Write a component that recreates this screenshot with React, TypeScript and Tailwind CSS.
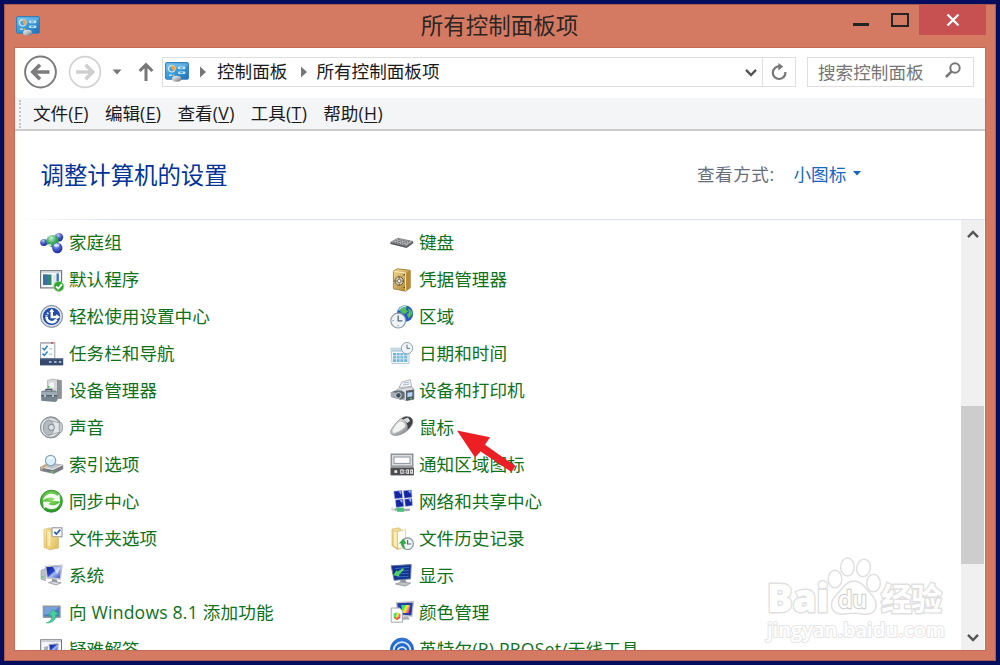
import React from "react";

const Svg = ({ children }: { children: React.ReactNode }) => (
  <svg viewBox="0 0 24 24" className="block h-6 w-6 shrink-0 overflow-visible">
    {children}
  </svg>
);

const Defs = () => (
  <svg className="absolute h-0 w-0">
    <defs>
      <linearGradient id="cp" x1="0" y1="0" x2="1" y2="1">
        <stop offset="0" stopColor="#5fb9ea" />
        <stop offset="0.5" stopColor="#3a9ad9" />
        <stop offset="1" stopColor="#1f6fb8" />
      </linearGradient>
      <radialGradient id="blueBall" cx="0.4" cy="0.25" r="0.8">
        <stop offset="0" stopColor="#c3d0fa" />
        <stop offset="0.45" stopColor="#4a62cc" />
        <stop offset="1" stopColor="#14259c" />
      </radialGradient>
      <radialGradient id="greenBall" cx="0.4" cy="0.25" r="0.8">
        <stop offset="0" stopColor="#c8f0d0" />
        <stop offset="0.5" stopColor="#43ac63" />
        <stop offset="1" stopColor="#17803a" />
      </radialGradient>
      <radialGradient id="sync" cx="0.5" cy="0.35" r="0.7">
        <stop offset="0" stopColor="#9be36d" />
        <stop offset="0.6" stopColor="#4cb838" />
        <stop offset="1" stopColor="#1e8a26" />
      </radialGradient>
      <linearGradient id="metal" x1="0" y1="0" x2="1" y2="1">
        <stop offset="0" stopColor="#f4f4f4" />
        <stop offset="0.55" stopColor="#b4b7ba" />
        <stop offset="1" stopColor="#5c6064" />
      </linearGradient>
      <linearGradient id="screen" x1="0" y1="0" x2="1" y2="1">
        <stop offset="0" stopColor="#0d1c8e" />
        <stop offset="0.45" stopColor="#2444c4" />
        <stop offset="0.55" stopColor="#a9bdf5" />
        <stop offset="1" stopColor="#1a34b0" />
      </linearGradient>
      <linearGradient id="folder" x1="0" y1="0" x2="1" y2="1">
        <stop offset="0" stopColor="#fdf0b4" />
        <stop offset="1" stopColor="#dfb655" />
      </linearGradient>
      <linearGradient id="safe" x1="0" y1="0" x2="1" y2="1">
        <stop offset="0" stopColor="#f0d890" />
        <stop offset="1" stopColor="#a87c28" />
      </linearGradient>
      <linearGradient id="rainbow" x1="0" y1="0" x2="1" y2="0.4">
        <stop offset="0" stopColor="#26d8e8" />
        <stop offset="0.35" stopColor="#48e04a" />
        <stop offset="0.6" stopColor="#fff03a" />
        <stop offset="1" stopColor="#f03a90" />
      </linearGradient>
      <linearGradient id="wifi" x1="0" y1="0" x2="0" y2="1">
        <stop offset="0" stopColor="#2f78dc" />
        <stop offset="1" stopColor="#124aa8" />
      </linearGradient>
    </defs>
  </svg>
);

const PanelIcon = () => (
  <svg viewBox="0 0 24 20" className="block h-5 w-6 shrink-0">
    <rect x="0.6" y="0.6" width="22.8" height="16.6" rx="1" fill="url(#cp)" stroke="#2f7db6" />
    <path d="M1.5 1.5H22.5V4L1.5 9Z" fill="#fff" opacity="0.18" />
    <circle cx="6.8" cy="6.8" r="3.2" fill="#4aa0e0" stroke="#d9effb" strokeWidth="1.2" />
    <path d="M6.8 6.8V3.2A3.5 3.5 0 0 1 8.8 9.6Z" fill="#f6a53a" />
    <rect x="13" y="4.6" width="7.4" height="2.6" rx="1.2" fill="#c5e6f8" />
    <rect x="13" y="9.4" width="7.4" height="2.6" rx="1.2" fill="#c5e6f8" />
    <path d="M15 5.9h3M15 10.7h3" stroke="#3c8fcb" strokeWidth="1" />
    <path d="M4 13.2h3" stroke="#cfe9f8" strokeWidth="1.3" />
    <circle cx="8.4" cy="13.2" r="0.9" fill="#f9b24a" />
    <ellipse cx="11.6" cy="16.8" rx="4.6" ry="3" fill="url(#metal)" />
  </svg>
);

const HomeGroup = () => (
  <Svg>
    <circle cx="19" cy="6.3" r="4.2" fill="url(#blueBall)" />
    <circle cx="3.8" cy="11.5" r="3.6" fill="url(#blueBall)" />
    <circle cx="12.5" cy="10.2" r="6.2" fill="url(#greenBall)" />
    <circle cx="17.3" cy="17" r="5.2" fill="url(#blueBall)" />
    <ellipse cx="16.6" cy="14.2" rx="2.8" ry="1.5" fill="#fff" opacity="0.6" />
    <ellipse cx="9.4" cy="14.4" rx="2.2" ry="1.4" fill="#fff" opacity="0.75" />
  </Svg>
);
const DefaultPrograms = () => (
  <Svg>
    <rect x="0.6" y="2.7" width="21" height="17.2" fill="#f7f8fa" stroke="#6b7078" strokeWidth="1.1" />
    <path d="M1 4h20" stroke="#c9ced6" strokeWidth="1.4" />
    <rect x="3" y="6.5" width="8.5" height="10.5" fill="#2f8577" />
    <path d="M3 6.5h4v10.5h-4z" fill="#3b70a4" />
    <rect x="13" y="6.5" width="3" height="10.5" fill="#e2e6ec" />
    <rect x="16.5" y="5.5" width="2.4" height="8" fill="#3873bb" />
    <circle cx="18.8" cy="18.4" r="5" fill="#2fa82e" stroke="#8bce82" strokeWidth="0.7" />
    <path d="M16 18.3l2.2 2.4 3.8-4.6" fill="none" stroke="#fff" strokeWidth="1.8" />
  </Svg>
);
const EaseAccess = () => (
  <Svg>
    <circle cx="11.6" cy="11.4" r="11" fill="#c7ccd4" stroke="#848c9c" strokeWidth="1" />
    <circle cx="11.6" cy="11.4" r="9.2" fill="#234cae" stroke="#f2f5fb" strokeWidth="1" />
    <path d="M6.6 12a5.2 5.2 0 0 0 9.8 2.4" fill="none" stroke="#fff" strokeWidth="2.6" />
    <path d="M6.4 11.8a5.5 5.5 0 0 1 2.5-4.4" fill="none" stroke="#d5e0f9" strokeWidth="2" strokeDasharray="1.8 1" />
    <path d="M11.8 5v7h6" fill="none" stroke="#fff" strokeWidth="2.4" />
    <path d="M9.4 7l2.4-3.6L14.2 7zM16.2 9.2l4 2.8-4 2.6z" fill="#fff" />
  </Svg>
);
const Taskbar = () => (
  <Svg>
    <rect x="0.6" y="0.8" width="14.2" height="16" fill="#fbfbfc" stroke="#9b9fa6" />
    <path d="M1.5 1h12.8" stroke="#a9adb4" strokeWidth="1.2" />
    <path d="M11 1h2" stroke="#d84a44" strokeWidth="1.5" />
    <path d="M2.5 6l1.8 1.8 3.3-4M2.5 11.6l1.8 1.8 3.3-4" fill="none" stroke="#2d86cb" strokeWidth="1.5" />
    <path d="M9 6.8h3.5M9 12.2h3.5" stroke="#b8bcc3" />
    <rect x="0" y="16.4" width="23.2" height="7" fill="#35496d" />
    <path d="M0 16.8h23.2" stroke="#667a9c" />
    <path d="M9 20h2.6M14 20h2.6M18.8 20h2.6" stroke="#9eb0cc" strokeWidth="2" />
  </Svg>
);
const DeviceManager = () => (
  <Svg>
    <path d="M7.5 1.5l4-1.4L21.6 1.4v18l-9 1-5-2z" fill="#d4d8da" stroke="#a4a9ac" strokeWidth="0.7" />
    <path d="M17 0.8l4.6.6v18l-4.6.6z" fill="#8c9296" />
    <path d="M9.5 3.5h4.5v5h-4.5z" fill="#f5f7f7" />
    <circle cx="8.6" cy="8" r="1" fill="#4fc352" />
    <path d="M6 12.2v-1.8h5.6v1.8" fill="none" stroke="#4c5962" strokeWidth="1.4" />
    <path d="M1.2 12.6l2-1.2h12l2.2 1.6v8.6l-2 1.3-14.2-1.2z" fill="#74848f" />
    <path d="M1.2 12.8h16v3.4h-16z" fill="#9baab4" />
    <path d="M1 16.7h16" stroke="#4b5962" />
    <path d="M5 15.8v2M13 15.8v2" stroke="#e4eaee" strokeWidth="1.4" />
  </Svg>
);
const Sound = () => (
  <Svg>
    <circle cx="11" cy="11.4" r="10.6" fill="#a3a8ad" stroke="#868b90" />
    <circle cx="10.4" cy="11.4" r="8.6" fill="#c8ced2" stroke="#e7eaec" strokeWidth="1.3" />
    <path d="M8 4.2L20 7q2.6 4.4 0 9L8 19.4z" fill="#e2e6e8" stroke="#90969a" strokeWidth="0.7" />
    <ellipse cx="8.6" cy="11.6" rx="5.2" ry="7.6" fill="#b3bac0" stroke="#8c949b" strokeWidth="0.8" />
    <circle cx="11.4" cy="11.4" r="3" fill="#dbe1e5" stroke="#7d858c" />
    <ellipse cx="20.8" cy="11.4" rx="1.8" ry="5" fill="#c7cbce" stroke="#8d9296" strokeWidth="0.7" />
  </Svg>
);
const Indexing = () => (
  <Svg>
    <path d="M0.5 14l8-4 14.4 2v4l-9 4.6L0.5 17.6z" fill="#bfc3c6" stroke="#96999c" strokeWidth="0.7" />
    <path d="M0.5 14.2L12.8 16.8 22.8 12v4l-9 4.6L0.5 17.6z" fill="#777c80" />
    <path d="M1 14l11.8 2.4L22.4 12" fill="none" stroke="#eef0f1" />
    <path d="M11 18.8l2.6.4" stroke="#4ed34c" strokeWidth="1.8" />
    <path d="M6.8 11.2L1 16.5" stroke="#d6a672" strokeWidth="1.8" />
    <circle cx="10.6" cy="7.6" r="5.2" fill="#d9eefb" stroke="#8aa5b8" strokeWidth="1.2" />
    <path d="M8 6q2.6-2.8 5.4-.4" fill="none" stroke="#fff" strokeWidth="1.5" />
  </Svg>
);
const Sync = () => (
  <Svg>
    <circle cx="11.4" cy="11.2" r="11" fill="url(#sync)" stroke="#2f8b35" strokeWidth="0.9" />
    <path d="M2.8 10.6C4.4 3.6 12.6 1.8 17.4 5.8l2-1.7.7 7.3-7.8-.7 2.2-2C11.4 6.5 6.6 7.4 2.8 10.6z" fill="#f7fdf4" />
    <path d="M20 12.2C18.6 19.2 10.4 21 5.6 17l-1.8 1.7-.8-7.3 7.7.7-2.2 2c3.2 2.2 7.8 1.3 11.5-1.9z" fill="#f7fdf4" />
  </Svg>
);
const FolderOptions = () => (
  <Svg>
    <path d="M4 2.4l6-1.6 1 1.8V22l-7-1.4z" fill="url(#folder)" stroke="#d5b461" strokeWidth="0.6" />
    <rect x="12" y="0.8" width="10" height="9" fill="#fff" stroke="#858b95" />
    <path d="M14.3 5l2.2 2 3.8-4.4" fill="none" stroke="#2e62b3" strokeWidth="1.7" />
    <path d="M6.5 3.6l4.2-1.4.8 7.2 7 1.3V21l-8.8 1.8-3.2-1.6z" fill="url(#folder)" stroke="#d5b461" strokeWidth="0.6" />
    <path d="M9.4 5v14" stroke="#fff4c8" strokeWidth="1.5" />
  </Svg>
);
const Monitor = () => (
  <>
    <path d="M5.5 2.5l16.5-1.2-1.6 13.7L7.2 14z" fill="url(#screen)" stroke="#c4c7cd" strokeWidth="1.4" />
    <path d="M12 15l4.6.5 1 3H12z" fill="#92969b" />
    <path d="M8.4 18.6l5-1.3 7.8 1.5-5.2 2.2z" fill="#d6d8dc" stroke="#868a90" strokeWidth="0.7" />
  </>
);
const SystemIcon = () => (
  <Svg>
    <path d="M1 6.2l4.4-1.6v12L1 15.2z" fill="#bdc1c5" stroke="#8f9498" strokeWidth="0.6" />
    <path d="M1.7 13h1.7" stroke="#45c950" strokeWidth="1.4" />
    <Monitor />
    <path d="M12.8 2.7l4.4 7.5 3.7-7.9z" fill="#e7edff" opacity="0.75" />
  </Svg>
);
const AddFeatures = () => (
  <Svg>
    <rect x="3.4" y="5.2" width="16.6" height="11" fill="#4d7dc2" stroke="#91979f" strokeWidth="1.4" />
    <path d="M4.2 6h15l-9 7-6 .8z" fill="#8cb6e5" opacity="0.65" />
    <path d="M6.4 21.8c5-1.4 5.6-4.6 5-7.4l-3 .7 4.4-6.6 6 4.8-3 .6c.4 4.8-4 8.4-9.4 7.9z" fill="#47d09c" stroke="#249e72" strokeWidth="0.6" />
  </Svg>
);
const Troubleshoot = () => (
  <Svg>
    <rect x="0.7" y="1.8" width="20.8" height="19" fill="#f5f6f9" stroke="#6e737c" />
    <path d="M1 3.2h20" stroke="#cbd0d7" strokeWidth="1.8" />
    <path d="M4 9l4-1v8H4z" fill="#aab1bb" />
    <path d="M9 6.5l9.2-.8-.6 8.3H9.8z" fill="url(#screen)" stroke="#a8aeb9" />
  </Svg>
);
const Keyboard = () => (
  <Svg>
    <path d="M0.4 11.8L7.8 7.4 23.2 10.6v1.6l-6.6 4.8L0.4 13z" fill="#55585b" />
    <path d="M0.6 11.2L8 7.2 22.8 10.4 16.2 15z" fill="#b9bbbd" stroke="#76797b" strokeWidth="0.7" />
    <path d="M3.4 11L16 13.8M5.6 9.7L18.4 12.4M8 8.5l12.4 2.6" stroke="#55585b" strokeWidth="0.9" strokeDasharray="1.7 0.8" />
  </Svg>
);
const Credential = () => (
  <Svg>
    <path d="M3.4 3l4-2.2 12.8 1.4v17.6l-4.6 3.4-12.2-2.4z" fill="url(#safe)" stroke="#977633" strokeWidth="0.8" />
    <path d="M15.6 5.2l4.6-3v17.6l-4.6 3.4z" fill="#b88b32" />
    <path d="M3.6 3.3l12 1.7v17.8" fill="none" stroke="#f8e9b9" />
    <circle cx="9.2" cy="13" r="4.2" fill="#d5cfbd" stroke="#6a5c39" />
    <circle cx="9.2" cy="13" r="1.8" fill="#f2eee2" stroke="#6a5c39" strokeWidth="0.8" />
    <path d="M9.2 8v2.6M9.2 15.6V18M4.2 13h2.6M11.6 13h2.6" stroke="#665732" strokeWidth="0.9" />
    <path d="M13.4 6.8h1.6M13.4 19.4h1.6" stroke="#6c592f" strokeWidth="1.4" />
  </Svg>
);
const Region = () => (
  <Svg>
    <circle cx="15" cy="8.6" r="8.2" fill="#2458c8" />
    <path d="M9.5 3q4-3 7.4-2l-1 3.6 2.2 1.6-3.4 3-3.8-1.6zM18 3.3q4 1.8 4.6 5.5l-3.8 4.6-2-3.8 2.2-2z" fill="#53bd58" />
    <path d="M8.7 5.4q3-4.5 7.3-4" fill="none" stroke="#b9dcff" strokeWidth="1.4" />
    <circle cx="8.2" cy="15.6" r="7.4" fill="#edf3f6" stroke="#8f9da6" strokeWidth="1.2" />
    <path d="M8.2 10.6v5.2h4.2" fill="none" stroke="#53697a" strokeWidth="1.3" />
    <path d="M8.2 21.3v-1.2M2.5 15.6h1.2" stroke="#7a8b97" />
  </Svg>
);
const DateTime = () => (
  <Svg>
    <path d="M1 6.2h18v15.4H2z" fill="#f5fafc" stroke="#a5b9c4" strokeWidth="0.8" />
    <path d="M2 8.5h14" stroke="#b2cfdd" strokeWidth="2.4" />
    <path d="M3 11h14.4v9H3z" fill="#74b5d8" />
    <path d="M3 13.8h14.5M3 16.8h14.5M6.5 11v9M10 11v9M13.6 11v9" stroke="#e1f1f8" strokeWidth="0.8" />
    <circle cx="17" cy="6.2" r="5.7" fill="#eff4f6" stroke="#96a5ae" />
    <path d="M17 2.7v3.7h3" fill="none" stroke="#5d7486" />
  </Svg>
);
const Printers = () => (
  <Svg>
    <path d="M9 8.5l3-5.5 8.4-2.2 1.2 6.7z" fill="#f8f9fa" stroke="#90979c" strokeWidth="0.7" />
    <path d="M13.5 4.2l5.7-1M13 6l6.5-1" stroke="#a2bbce" />
    <path d="M7 10.3l15-2.5 2 3v9.4l-7 1.4-10-3z" fill="#dce0e3" stroke="#8d9499" strokeWidth="0.7" />
    <path d="M16 11.8l7.8-1.2v9.6l-7.8 1.6z" fill="#4f5a66" />
    <path d="M17.4 13.8l5-.8v4.2l-5 1z" fill="#b4d4f4" />
    <path d="M1.2 13.2l4-1.7h6.2l3.2 2v5.7l-4 1.5-9.4-2.7z" fill="#626c75" />
    <path d="M0.6 13l9 1.2v6L0.8 17.6z" fill="#a5adb4" />
    <circle cx="8.4" cy="16.4" r="2.8" fill="#414d5b" stroke="#e0e4e8" strokeWidth="0.9" />
    <path d="M20 19.4h2" stroke="#52d154" />
  </Svg>
);
const MouseIcon = () => (
  <Svg>
    <path d="M0.8 14.6C4.4 8.4 9 2.6 14.5 .8q5.4-1.2 7.9 2.6c1.6 4.2-2 9-7.6 12.9-4.4 3-9.8 4-13 2.2q-1.9-1.4-1-3.9z" fill="url(#metal)" stroke="#74777a" strokeWidth="0.6" />
    <path d="M11.6 2.4c3.6-2.2 8.8-2.4 10.6 1 1 3.8-1.4 7.4-4.8 10.4 1-4.4-.6-8.4-5.8-11.4z" fill="#3e4144" />
    <path d="M13 3.6l5-2 2.2 3.4-3 2z" fill="#d9dddf" />
    <path d="M2.6 14.4c2.6-4.6 5-7.6 8-8.8 3 .6 4.8 2.6 4.8 5-3.4 4-9.8 7-12.4 6.2z" fill="#fff" opacity="0.8" />
  </Svg>
);
const Tray = () => (
  <Svg>
    <rect x="1.2" y="1.2" width="21.6" height="12" fill="#d7dce1" stroke="#7b8086" strokeWidth="1.2" />
    <rect x="4" y="4" width="16" height="6.4" fill="#fafbfc" stroke="#8f959b" />
    <path d="M0.5 14.4h23.4v8h-23.4z" fill="#4b4d50" />
    <path d="M4.4 18.6h2.8" stroke="#eee" strokeWidth="2.6" />
    <rect x="10.8" y="16.9" width="2.3" height="3.4" fill="none" stroke="#eee" />
    <rect x="16.8" y="16.9" width="1.8" height="3.4" fill="none" stroke="#eee" />
    <rect x="20.7" y="16.9" width="1.7" height="3.4" fill="none" stroke="#eee" />
    <path d="M14.9 17.3v.9M14.9 19.3v.9" stroke="#eee" strokeWidth="1.1" />
  </Svg>
);
const Network = () => (
  <Svg>
    <path d="M3.8 1.3l8-.8.8 7.4-7.8.9zM13.4.8l8-.8.6 7.3-7.6.9zM5.4 10l7.6-.9.8 7.4-7.6.9zM14.6 9.2l7.4-.8.4 7.2-7 .8z" fill="#1327a6" stroke="#9fa8d4" strokeWidth="0.5" />
    <path d="M8.4 1.4l2.6 3.2.4-3.8zM17.8 .8l2.6 3.2.6-3.8zM9.6 10.2l2.8 3.2.2-3.8zM18.4 9.4l2.6 3.2.6-3.8z" fill="#91a5f1" />
    <path d="M1.6 18.8l9 1.4 9.2-.4" stroke="#a2a8ac" strokeWidth="2.4" fill="none" />
    <path d="M6.8 17.6h7v4.2h-7z" fill="#48c47a" />
    <path d="M1.6 18.6h3.4" stroke="#ddf2e5" strokeWidth="1.8" />
  </Svg>
);
const FileHistory = () => (
  <Svg>
    <path d="M2 2l7-1.2 2 1.8v19l-3.5.9L2 18.7z" fill="url(#folder)" stroke="#caa753" strokeWidth="0.6" />
    <path d="M7 4.5l8.6-1.8V21l-7.8.4z" fill="#fffdf4" stroke="#d6c891" strokeWidth="0.8" />
    <path d="M3.2 3l4.2 2.2v16.4l-4.2-3z" fill="#ffefb2" stroke="#d1ae57" strokeWidth="0.6" />
    <circle cx="17.6" cy="16.7" r="5.8" fill="#eff4f5" stroke="#849199" strokeWidth="1.2" />
    <path d="M17.6 13v4h3.5" fill="none" stroke="#577080" strokeWidth="1.2" />
    <path d="M15.6 21.6c-3.2-.4-4.6-2.7-4.3-5.1H8.8l4.5-5.1 3.3 5.3h-2.4c-.3 2 .4 3.7 1.4 4.9z" fill="#34a947" />
  </Svg>
);
const Display = () => (
  <Svg>
    <path d="M1.2 1.8l20-1.2-.7 14.2L4.2 16.3z" fill="#12308e" stroke="#65799f" strokeWidth="1" />
    <path d="M5 4.5l14-1M5.7 7.3l13-.8M6.3 10l12.3-.6M6.6 13l12-.7" stroke="#3c6ac8" strokeWidth="1" />
    <path d="M14 5.4l-5 5.4.6 1.6-6.4-1.2 3.6-5 .8 1.8 5.2-4z" fill="#51d467" />
    <path d="M10 16.2l5.4-.5 1.3 3h-6z" fill="#92989d" />
    <path d="M5.5 20l6-2.1 9.2 1.2-5.5 3z" fill="#bfc4c8" stroke="#80868b" strokeWidth="0.7" />
  </Svg>
);
const ColorMgmt = () => (
  <Svg>
    <path d="M6.5 1.6l17-.8-1.6 14.4L8 14z" fill="#253d9e" stroke="#c3c6cc" strokeWidth="1.3" />
    <path d="M11.3 4h9l-1.5 8h-6.4z" fill="url(#rainbow)" />
    <path d="M14 15.3l4 .3 1.8 3-8 .2z" fill="#a8acb1" />
    <path d="M1.2 7h8.4l3 2.8v11.4H1.2z" fill="#fff" stroke="#a5a9ae" />
    <path d="M3.7 12.5l3.6-1.3 3 1.8v3.7l-3.4 2.6-3.2-2.3z" fill="url(#rainbow)" />
    <path d="M3.7 16l3.2 3.3 3.4-2.6z" fill="#e94438" opacity="0.75" />
  </Svg>
);
const Wifi = () => (
  <Svg>
    <circle cx="12" cy="11.6" r="11.6" fill="url(#wifi)" stroke="#2864bb" strokeWidth="0.8" />
    <path d="M3.6 12.5a8.4 8.4 0 0 1 16.8 0M7.6 13.5a4.4 4.4 0 0 1 8.8 0" fill="none" stroke="#d9ecff" strokeWidth="1.8" />
    <circle cx="12" cy="15" r="1.6" fill="#fff" />
  </Svg>
);

type Item = [string, () => React.JSX.Element];
const left: Item[] = [
  ["家庭组", HomeGroup],
  ["默认程序", DefaultPrograms],
  ["轻松使用设置中心", EaseAccess],
  ["任务栏和导航", Taskbar],
  ["设备管理器", DeviceManager],
  ["声音", Sound],
  ["索引选项", Indexing],
  ["同步中心", Sync],
  ["文件夹选项", FolderOptions],
  ["系统", SystemIcon],
  ["向 Windows 8.1 添加功能", AddFeatures],
  ["疑难解答", Troubleshoot],
];
const right: Item[] = [
  ["键盘", Keyboard],
  ["凭据管理器", Credential],
  ["区域", Region],
  ["日期和时间", DateTime],
  ["设备和打印机", Printers],
  ["鼠标", MouseIcon],
  ["通知区域图标", Tray],
  ["网络和共享中心", Network],
  ["文件历史记录", FileHistory],
  ["显示", Display],
  ["颜色管理", ColorMgmt],
  ["英特尔(R) PROSet/无线工具", Wifi],
];

const Column = ({ items }: { items: Item[] }) => (
  <div className="flex w-[350px] shrink-0 flex-col">
    {items.map(([label, Icon]) => (
      <div key={label} className="flex h-[37px] shrink-0 items-center gap-[5px] whitespace-nowrap text-[#0f7119]">
        <Icon />
        <span className={/[a-z]/.test(label) ? "pb-[2px] tracking-[0.2px]" : "pb-[2px]"}>{label}</span>
      </div>
    ))}
  </div>
);

const menus = [
  ["文件", "F"],
  ["编辑", "E"],
  ["查看", "V"],
  ["工具", "T"],
  ["帮助", "H"],
];

const Chevron = ({ up = false }: { up?: boolean }) => (
  <svg viewBox="0 0 12 9" className="h-[9px] w-3">
    <path d={up ? "M1 7.2L6 2l5 5.2" : "M1 1.8L6 7l5-5.2"} fill="none" stroke="#555" strokeWidth="2.4" />
  </svg>
);

export default function App() {
  return (
    <div className="relative h-[665px] w-[1000px] overflow-hidden bg-[#060d5c] p-1 font-['Open_Sans','Noto_Sans_CJK_SC',sans-serif] text-[17.6px] leading-6">
      <Defs />
      <div className="flex h-[657px] w-[992px] flex-col border border-[#a35c4e] bg-[#d47a62] px-[10px] pb-[10px]">
        <header className="flex h-[43px] shrink-0 items-start">
          <div className="ml-[1px] mt-[11px] w-[121px]">
            <PanelIcon />
          </div>
          <h1 className="mt-[5px] flex-1 pl-[9px] text-center text-[22.5px] leading-8 text-[#2b2523]">所有控制面板项</h1>
          <div className="-mr-px flex w-[133px] shrink-0 items-start">
            <div className="mt-[18px] h-[3px] w-4 bg-[#252525]" />
            <div className="ml-[22px] mt-[8px] h-[14px] w-[18px] border-2 border-[#252525]" />
            <div className="ml-[10px] flex h-[30px] w-[67px] items-center justify-center bg-[#c75050]">
              <svg viewBox="0 0 14 12" className="h-3 w-[14px]">
                <path d="M1.5 0.5L12.5 11.5M12.5 0.5L1.5 11.5" stroke="#fff" strokeWidth="2.2" />
              </svg>
            </div>
          </div>
        </header>

        <main className="flex min-h-0 flex-1 flex-col bg-white outline outline-1 outline-[#c06c58]">
          <nav className="mb-[2px] flex h-[48px] shrink-0 items-center pl-[9px]">
            <svg viewBox="0 0 34 34" className="mb-px h-[34px] w-[34px]">
              <circle cx="16.5" cy="17" r="15.4" fill="none" stroke="#7c7c7c" strokeWidth="2" />
              <path d="M25.5 17H9M16 9.8L8.8 17l7.2 7.2" fill="none" stroke="#7c7c7c" strokeWidth="3.6" />
            </svg>
            <svg viewBox="0 0 34 34" className="mb-px ml-[10px] h-[34px] w-[34px]">
              <circle cx="17" cy="17" r="15.4" fill="none" stroke="#d2d2d2" strokeWidth="1.6" />
              <path d="M8 17h16.5M17.5 9.8l7.2 7.2-7.2 7.2" fill="none" stroke="#cfcfcf" strokeWidth="3.6" />
            </svg>
            <svg viewBox="0 0 10 6" className="ml-[10px] h-[6px] w-[10px]">
              <path d="M0.5 0.5h9L5 5.5z" fill="#777" />
            </svg>
            <svg viewBox="0 0 16 20" className="ml-[16px] h-5 w-4">
              <path d="M8 19V3M1.6 9L8 2.6 14.4 9" fill="none" stroke="#777" strokeWidth="3" />
            </svg>
            <div className="ml-[8px] flex h-[30px] w-[634px] items-center border border-[#dfdfdf]">
              <div className="ml-[2px]">
                <PanelIcon />
              </div>
              <svg viewBox="0 0 6 12" className="ml-[11px] h-3 w-[6px]">
                <path d="M0 0.5L6 6 0 11.5z" fill="#777" />
              </svg>
              <span className="ml-[11px] pb-[2px] text-[#1a1a1a]">控制面板</span>
              <svg viewBox="0 0 6 12" className="ml-[14px] h-3 w-[6px]">
                <path d="M0 0.5L6 6 0 11.5z" fill="#777" />
              </svg>
              <span className="ml-[9px] flex-1 pb-[2px] text-[#1a1a1a]">所有控制面板项</span>
              <Chevron />
              <div className="ml-[5px] flex h-7 w-[33px] items-center justify-center border-l border-[#dfdfdf]">
                <svg viewBox="0 0 18 18" className="h-[18px] w-[18px]">
                  <path d="M9.5 3.4A6.3 6.3 0 1 0 15.4 9" fill="none" stroke="#777" strokeWidth="2.2" />
                  <path d="M8.3 0v7.4l5-3.8z" fill="#777" />
                </svg>
              </div>
            </div>
            <div className="ml-[11px] flex h-[30px] w-[167px] items-center justify-between border border-[#dfdfdf] pl-[10px] pr-3 text-[#767676]">
              <span>搜索控制面板</span>
              <svg viewBox="0 0 16 16" className="mb-1 h-4 w-4">
                <circle cx="10" cy="6" r="4.7" fill="none" stroke="#777" strokeWidth="2" />
                <path d="M6.6 9.4L1 15" stroke="#777" strokeWidth="2.6" />
              </svg>
            </div>
          </nav>

          <div className="flex h-[33px] shrink-0 items-center border-b-2 border-[#cbcccd] bg-[#f4f5f7]">
            <div className="ml-[4px] h-[28px] border-l-2 border-dotted border-[#c4c5c7]" />
            <div className="ml-[12px] flex gap-4 pb-[2px] text-[#1a1a1a]">
              {menus.map(([name, key]) => (
                <span key={key}>
                  {name}
                  <span className="tracking-[0.4px]">
                    (<span className="underline underline-offset-2">{key}</span>)
                  </span>
                </span>
              ))}
            </div>
          </div>

          <div className="flex h-[88px] shrink-0 items-center">
            <h2 className="w-[682px] pl-[25.5px] text-[23.4px] leading-8 text-[#003399]">调整计算机的设置</h2>
            <span className="pb-[3px] tracking-[0.5px] text-[#666e7c]">查看方式:</span>
            <span className="ml-[19px] pb-[3px] text-[#1467c4]">小图标</span>
            <svg viewBox="0 0 8 5" className="mb-[3px] ml-[7px] h-[5px] w-2">
              <path d="M0 0h8L4 4.5z" fill="#1467c4" />
            </svg>
          </div>
          <div className="h-px shrink-0 bg-linear-to-r from-white via-[#dde3ec] via-10% to-[#dde3ec]" />

          <div className="flex min-h-0 flex-1 overflow-hidden">
            <div className="flex min-w-0 flex-1 overflow-hidden pl-[25px] pt-[4px]">
              <Column items={left} />
              <Column items={right} />
            </div>
            <div className="mr-px flex w-[23px] shrink-0 flex-col items-center bg-[#f0f0f0]">
              <div className="flex h-[186px] items-start pt-[10px]">
                <Chevron up />
              </div>
              <div className="h-[158px] w-full bg-[#cdcdcd]" />
              <div className="flex flex-1 items-end pb-[8px]">
                <Chevron />
              </div>
            </div>
          </div>
        </main>
      </div>

      <svg viewBox="0 0 64 48" className="absolute left-[455px] top-[428px] h-12 w-16">
        <path d="M2 2.6L35 9.2l-5 7.6L60.5 38l-4 6L25.6 23.5 20 29.5z" fill="#ec2024" />
      </svg>

      <svg
        viewBox="0 0 190 96"
        className="absolute left-[760px] top-[552px] h-24 w-[190px]"
        fill="#fff"
        stroke="#e0e0e0"
        strokeWidth="1.5"
      >
        <text x="7" y="60" fontFamily="Open Sans" fontWeight="800" fontSize="39" textLength="62" lengthAdjust="spacingAndGlyphs" strokeWidth="2.8" paintOrder="stroke">Bai</text>
        <ellipse cx="75" cy="27" rx="6.8" ry="8.8" />
        <ellipse cx="87.5" cy="15" rx="6.8" ry="9" />
        <ellipse cx="103.5" cy="16" rx="6.8" ry="8.8" transform="rotate(12 103.5 16)" />
        <ellipse cx="113.5" cy="31" rx="6.8" ry="8.8" />
        <path d="M94 29c8 0 12 8 16 12 4 4 7 8 6 14-1 6-7 8-13 7-6-.8-13-.8-19 0-6 .8-12-2-12.5-8-.4-6 3-9 6.5-13 4-4 8-12 16-12z" />
        <text x="78" y="56" fontFamily="Open Sans" fontWeight="600" fontSize="24" textLength="29" lengthAdjust="spacingAndGlyphs" stroke="#d2d2d2" strokeWidth="2.4" paintOrder="stroke">du</text>
        <text x="121" y="58" fontFamily="Noto Sans CJK SC" fontWeight="700" fontSize="31" textLength="61" strokeWidth="2.8" paintOrder="stroke">经验</text>
        <text x="7" y="85" fontFamily="Open Sans" fontWeight="600" fontSize="20" textLength="178" lengthAdjust="spacingAndGlyphs" strokeWidth="2" stroke="#e6e6e6" paintOrder="stroke">jingyan.baidu.com</text>
      </svg>
    </div>
  );
}
